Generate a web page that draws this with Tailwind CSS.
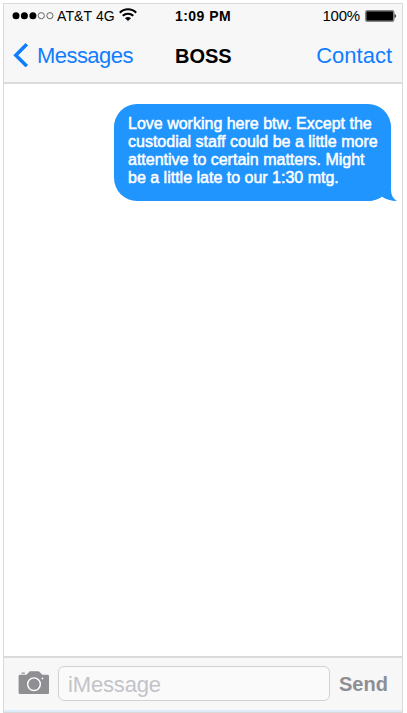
<!DOCTYPE html>
<html lang="en">
<head>
  <meta charset="UTF-8" />
  <meta name="viewport" content="width=device-width, initial-scale=1.0"/>
  <title>Messages</title>
  <script src="https://cdn.jsdelivr.net/npm/@tailwindcss/browser@4"></script>
</head>
<body class="bg-white h-[713px] overflow-hidden pl-[3px] pt-[3px] font-['Liberation_Sans',Arial,sans-serif]">
  <div class="w-[400px] h-[710px] flex flex-col border border-[#d9d9d9]">

    <header class="h-[80px] shrink-0 bg-[#f7f7f7] border-b-2 border-[#dcdcdc]">
      <!-- status bar -->
      <div class="h-6 grid grid-cols-[163px_1fr_auto] items-center pl-2 pr-[5px] text-black">
        <div class="flex items-center">
          <svg class="w-[43px] h-2" viewBox="0 0 43 8">
            <g fill="#000">
              <circle cx="4" cy="3.700" r="3.500"/><circle cx="12.400" cy="3.700" r="3.500"/><circle cx="20.900" cy="3.700" r="3.500"/>
            </g>
            <g fill="none" stroke="#444" stroke-width=".8">
              <circle cx="29.300" cy="3.700" r="3.100"/><circle cx="37.900" cy="3.700" r="3.100"/>
            </g>
          </svg>
          <span class="ml-[2px] w-[62px] whitespace-nowrap text-sm tracking-[0.1px]">AT&amp;T 4G</span>
          <svg class="w-[18px] h-[13px] -mt-[3px]" viewBox="0 0 18 13" fill="none" stroke="#000" stroke-width="2">
            <path d="M.8 4.700C5.300 .2 12.700 .2 17.200 4.700"/>
            <path d="M3.700 7.800C6.700 4.900 11.300 4.900 14.300 7.800"/>
            <path d="M9 13L6 10.200C7.700 8.600 10.300 8.600 12 10.200Z" fill="#000" stroke="none"/>
          </svg>
        </div>
        <span class="whitespace-nowrap text-sm font-bold tracking-[0.45px]">1:09 PM</span>
        <div class="flex items-center">
          <span class="text-[15px] tracking-[-0.2px] mr-[5px]">100%</span>
          <svg class="w-8 h-3" viewBox="0 0 32 12">
            <rect x=".75" y=".75" width="28" height="10.500" rx="1.500" fill="#000" stroke="#858585" stroke-width="1.500"/>
            <path d="M29.500 4C31.500 4.500 31.500 7.500 29.500 8Z" fill="#333"/>
          </svg>
        </div>
      </div>
      <!-- nav bar -->
      <nav class="h-[54px] grid grid-cols-[163px_1fr_auto] items-center pl-2 pr-[10px] text-[#107dff]">
        <a class="flex items-center">
          <svg class="w-[18px] h-6" viewBox="0 0 18 24" fill="none" stroke="#107dff" stroke-width="3.500">
            <path d="M14.800 1.200L3.800 12.200L14.800 23.200"/>
          </svg>
          <span class="ml-[7px] text-[22px] tracking-[-0.55px]">Messages</span>
        </a>
        <h1 class="pt-px text-xl font-bold text-black">BOSS</h1>
        <a class="text-[22px]">Contact</a>
      </nav>
    </header>

    <main class="flex-1 bg-white pt-5 pl-[110px]">
      <div class="relative w-[277px] h-[97px] rounded-[23px] bg-[#2095fe] pl-[14px] pt-[11px] text-base leading-[18px] text-white whitespace-nowrap [-webkit-text-stroke:0.5px_white]">
        <p>Love working here btw. Except the</p>
        <p>custodial staff could be a little more</p>
        <p>attentive to certain matters. Might</p>
        <p>be a little late to our 1:30 mtg.</p>
        <!-- bubble tail -->
        <svg class="absolute left-[253px] top-[73px] w-[31px] h-6" viewBox="0 0 31 24">
          <path d="M0 0H24V13C24 18 26 21.800 30 24C24 24 18.500 22.500 15 19.800C11 22.500 6 24 0 24Z" fill="#2095fe"/>
        </svg>
      </div>
    </main>

    <footer class="h-[56px] shrink-0 flex items-start bg-[#f7f7f8] border-t-2 border-t-[#dadada] border-b-2 border-b-[#deebf8] pl-[14px] pt-2">
      <svg class="w-8 h-6 mt-[5px]" viewBox="0 0 32 24">
        <path d="M2 3.800H8.500L11.300 .8C11.700 .3 12 .2 12.600 .2H20C20.600 .2 21 .4 21.400 .8L24.300 3.800H29.500C30.500 3.800 31 4.300 31 5.300V21.700C31 22.600 30.500 23 29.500 23H2C1.100 23 .6 22.500 .6 21.700V5.300C.6 4.400 1.100 3.800 2 3.800Z" fill="#8e8e93"/>
        <path d="M3.600 1.500H6.800V2.700H3.600Z" fill="#8e8e93"/>
        <circle cx="16" cy="13.200" r="6.300" fill="none" stroke="#fff" stroke-width="1.400"/>
        <circle cx="24.400" cy="7.400" r=".9" fill="#fff"/>
      </svg>
      <div class="ml-2 w-[272px] h-[35px] rounded-md border border-[#d2d2d5] bg-[#fafafa] pl-[9px] text-[22px] tracking-[-0.15px] leading-[35px] text-[#c3c3c9]">iMessage</div>
      <span class="ml-[9px] pt-px text-xl leading-[35px] font-bold text-[#8e8e93]">Send</span>
    </footer>
  </div>
</body>
</html>
